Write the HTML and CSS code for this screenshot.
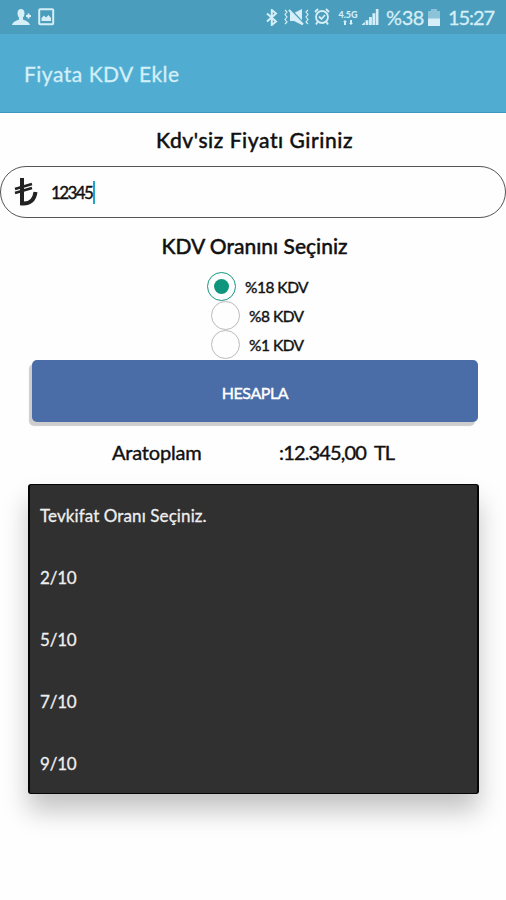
FILE: index.html
```
<!DOCTYPE html>
<html lang="tr">
<head>
    <meta charset="UTF-8">
    <meta name="viewport" content="width=device-width, initial-scale=1.0">
    <title>Fiyata KDV Ekle</title>
    <link rel="stylesheet" href="styles.css">
</head>
<body>
    <div class="status-bar">
        <div class="status-left">
            <svg class="icon-user" width="20" height="18" viewBox="0 0 20 18">
                <path d="M9 1C6.600 1 5.500 2.700 5.500 5c0 2 .6 3.500 1.500 4.500v2C5 12.500 1 13.500 0 17h18c-1-3.500-5-4.500-7-5.500v-2c.9-1 1.500-2.500 1.500-4.500C12.500 2.700 11.400 1 9 1z"/>
                <path d="M14 7h1.500V5.500h2V7H19v2h-1.500v1.500h-2V9H14z"/>
            </svg>
            <svg width="17" height="18" viewBox="0 0 17 18">
                <rect x="1.200" y="1.200" width="14" height="15" rx="1" fill="none" stroke="#d5eef7" stroke-width="2"/>
                <path d="M3.500 13V10l2.500-2.500 2 2 2.500-2.500L13 10v3z"/>
            </svg>
        </div>
        <div class="status-right">
            <svg class="icon-bluetooth" width="12" height="17" viewBox="0 0 12 17">
                <path d="M1 4.500l9 8L5.800 16V1L10 4.500l-9 8" fill="none" stroke="#d5eef7" stroke-width="2"/>
            </svg>
            <svg class="icon-mute" width="26" height="18" viewBox="0 0 26 18">
                <path d="M6 5h4l8-4v16L10 13H6z"/>
                <path d="M7 2l13 14" stroke="#4a9dbc" stroke-width="2"/>
                <path d="M5 2l14 14.500" stroke="#d5eef7" stroke-width="2"/>
                <path d="M1 2l2 2-2 2.500 2 2.500-2 2.500 2 2.500-2 2M24 2l-2 2 2 2.500L22 9l2 2.500-2 2.500 2 2" fill="none" stroke="#d5eef7" stroke-width="1.200"/>
            </svg>
            <svg class="icon-alarm" width="16" height="18" viewBox="0 0 16 18">
                <g fill="none" stroke="#d5eef7" stroke-width="1.800">
                    <circle cx="8" cy="9" r="6"/>
                    <path d="M1 4l3-3M15 4l-3-3M3.500 14L2 16.500M12.500 14l1.500 2.500M5 8.500L7.500 11 11 7"/>
                </g>
            </svg>
            <div class="network">
                <span>4.5G</span>
                <svg width="10" height="5" viewBox="0 0 10 5">
                    <path d="M0 2l2-2 2 2H3v3H1V2zM6 3l2 2 2-2H9V0H7v3z"/>
                </svg>
            </div>
            <svg class="icon-signal" width="18" height="16" viewBox="0 0 18 17">
                <path d="M0 17l3.500-3.500V17zM4.300 12H7.300v5h-3zM8 8.500h3V17H8zM11.600 4.500h3V17h-3zM15.200 0H18v17h-2.800z"/>
            </svg>
            <span class="percent">%38</span>
            <svg class="icon-battery" width="12" height="17" viewBox="0 0 12 17">
                <path d="M3 0h6v2h3v8H0V2h3z" fill="#8cc3d8"/>
                <path d="M0 9.500h12V17H0z"/>
            </svg>
            <span class="clock">15:27</span>
        </div>
    </div>

    <header class="app-bar">
        <h1>Fiyata KDV Ekle</h1>
    </header>

    <main class="content">
        <h2 class="price-title">Kdv'siz Fiyatı Giriniz</h2>
        <div class="price-input">
            <svg width="24" height="30" viewBox="0 0 24 30">
                <path d="M8 1v25.500c7.500.8 12.500-3.500 13.500-11.500" fill="none" stroke="#222" stroke-width="4"/>
                <path d="M1 12l17-5M1 16l17-5" fill="none" stroke="#222" stroke-width="2.800"/>
            </svg>
            <span class="price-value">12345</span>
            <span class="cursor"></span>
        </div>

        <h2 class="rate-title">KDV Oranını Seçiniz</h2>
        <div class="rates">
            <div class="rate selected"><span class="radio"></span><span class="rate-label first">%18 KDV</span></div>
            <div class="rate"><span class="radio"></span><span class="rate-label">%8 KDV</span></div>
            <div class="rate"><span class="radio"></span><span class="rate-label">%1 KDV</span></div>
        </div>

        <div class="button-wrap">
            <button class="calculate">HESAPLA</button>
        </div>

        <div class="subtotal">
            <span class="subtotal-label">Aratoplam</span>
            <span class="subtotal-value">:12.345,00&nbsp; TL</span>
        </div>

        <ul class="dropdown">
            <li class="prompt"><span>Tevkifat Oranı Seçiniz.</span></li>
            <li><span>2/10</span></li>
            <li><span>5/10</span></li>
            <li><span>7/10</span></li>
            <li><span>9/10</span></li>
        </ul>
    </main>
</body>
</html>
```
FILE: styles.css
```
* {
    box-sizing: border-box;
}
body {
    margin: 0;
    height: 900px;
    background: #fefefe;
    color: #111;
    font-family: 'Lato', 'Open Sans', sans-serif;
    overflow: hidden;
}
h1, h2, ul {
    margin: 0;
    padding: 0;
    font-weight: normal;
}
svg {
    display: block;
    flex: none;
}

/* Status bar */
.status-bar {
    display: flex;
    justify-content: space-between;
    height: 34px;
    padding: 0 12px;
    background: #4a9dbc;
    color: #d5eef7;
}
.status-bar svg {
    fill: #d5eef7;
}
.status-left, .status-right {
    display: flex;
    align-items: center;
}
.status-left {
    gap: 6px;
}
.icon-mute {
    margin-left: 6px;
}
.icon-alarm {
    margin-left: 4px;
}
.network {
    display: flex;
    flex-direction: column;
    align-items: center;
    width: 20px;
    margin-left: 8px;
    font-size: 9px;
    font-weight: 900;
    line-height: 9px;
    gap: 1px;
}
.icon-signal {
    margin-left: 3px;
}
.percent, .clock {
    font-size: 20px;
    line-height: 32px;
    -webkit-text-stroke: 0.3px #d5eef7;
}
.percent {
    width: 38px;
    margin-left: 7px;
    letter-spacing: -0.4px;
}
.icon-battery {
    margin-left: 4px;
}
.clock {
    width: 46px;
    margin-left: 8px;
    letter-spacing: -1.1px;
}

/* Title bar */
.app-bar {
    display: flex;
    align-items: center;
    height: 79px;
    padding: 0 24px;
    background: #50add1;
    border-bottom: 1px solid #3d98bd;
}
.app-bar h1 {
    color: #d3eff9;
    font-size: 21px;
    letter-spacing: 0.5px;
    -webkit-text-stroke: 0.3px #d3eff9;
}

/* Form */
.content {
    display: flex;
    flex-direction: column;
}
.price-title, .rate-title {
    text-align: center;
    font-size: 21px;
    font-weight: 500;
    white-space: nowrap;
    -webkit-text-stroke: 0.4px #111;
}
.price-title {
    height: 53px;
    padding-left: 3px;
    line-height: 53px;
    letter-spacing: 0.55px;
}
.price-input {
    display: flex;
    align-items: center;
    height: 52px;
    padding-left: 13px;
    border: 1px solid #555;
    border-radius: 26px;
}
.price-value {
    margin-left: 13px;
    font-size: 17px;
    -webkit-text-stroke: 0.4px #111;
    letter-spacing: -1.600px;
}
.cursor {
    width: 2px;
    height: 23px;
    margin-left: 1px;
    background: #22a5c4;
}
.rate-title {
    height: 54px;
    padding-left: 3px;
    line-height: 55px;
}
.rates {
    display: flex;
    flex-direction: column;
    align-items: center;
    padding-left: 9px;
}
.rate {
    display: flex;
    align-items: center;
    gap: 9px;
    height: 29px;
}
.radio {
    display: flex;
    align-items: center;
    justify-content: center;
    width: 29px;
    height: 29px;
    border: 1px solid #bbb;
    border-radius: 50%;
}
.selected .radio {
    border-color: #16967f;
}
.selected .radio::after {
    content: "";
    width: 15px;
    height: 15px;
    border-radius: 50%;
    background: #0f957c;
}
.rate-label {
    width: 55px;
    font-size: 15.5px;
    letter-spacing: -0.5px;
    white-space: nowrap;
    -webkit-text-stroke: 0.4px #111;
}
.rate-label.first {
    width: 63px;
}
.button-wrap {
    margin-top: 1px;
    padding: 0 28px 0 32px;
}
.calculate {
    display: block;
    width: 100%;
    height: 62px;
    padding: 2px 0 0;
    background: #4a6da8;
    border: none;
    border-radius: 5px;
    box-shadow: -3px 4px 1px #cdcdcd;
    color: #fff;
    font-family: inherit;
    font-size: 16px;
    letter-spacing: -0.4px;
    -webkit-text-stroke: 0.4px #fff;
}
.subtotal {
    display: flex;
    height: 62px;
    padding-left: 112px;
    line-height: 61px;
    font-size: 20px;
    -webkit-text-stroke: 0.4px #111;
    white-space: nowrap;
}
.subtotal-label {
    width: 167px;
    letter-spacing: -0.2px;
}
.subtotal-value {
    letter-spacing: -0.85px;
}

/* Withholding rate list */
.dropdown {
    height: 310px;
    margin: 0 27px 0 28px;
    background: #303030;
    border: 1px solid #050505;
    border-width: 1px 2px;
    border-radius: 3px;
    box-shadow: 0 17px 26px rgba(0, 0, 0, 0.23);
    list-style: none;
}
.dropdown li {
    display: flex;
    align-items: center;
    height: 61.800px;
    padding-left: 10px;
    color: #eee;
    font-size: 17px;
    letter-spacing: -0.2px;
    -webkit-text-stroke: 0.3px #eee;
}
.dropdown .prompt {
    letter-spacing: 0.1px;
}
```
